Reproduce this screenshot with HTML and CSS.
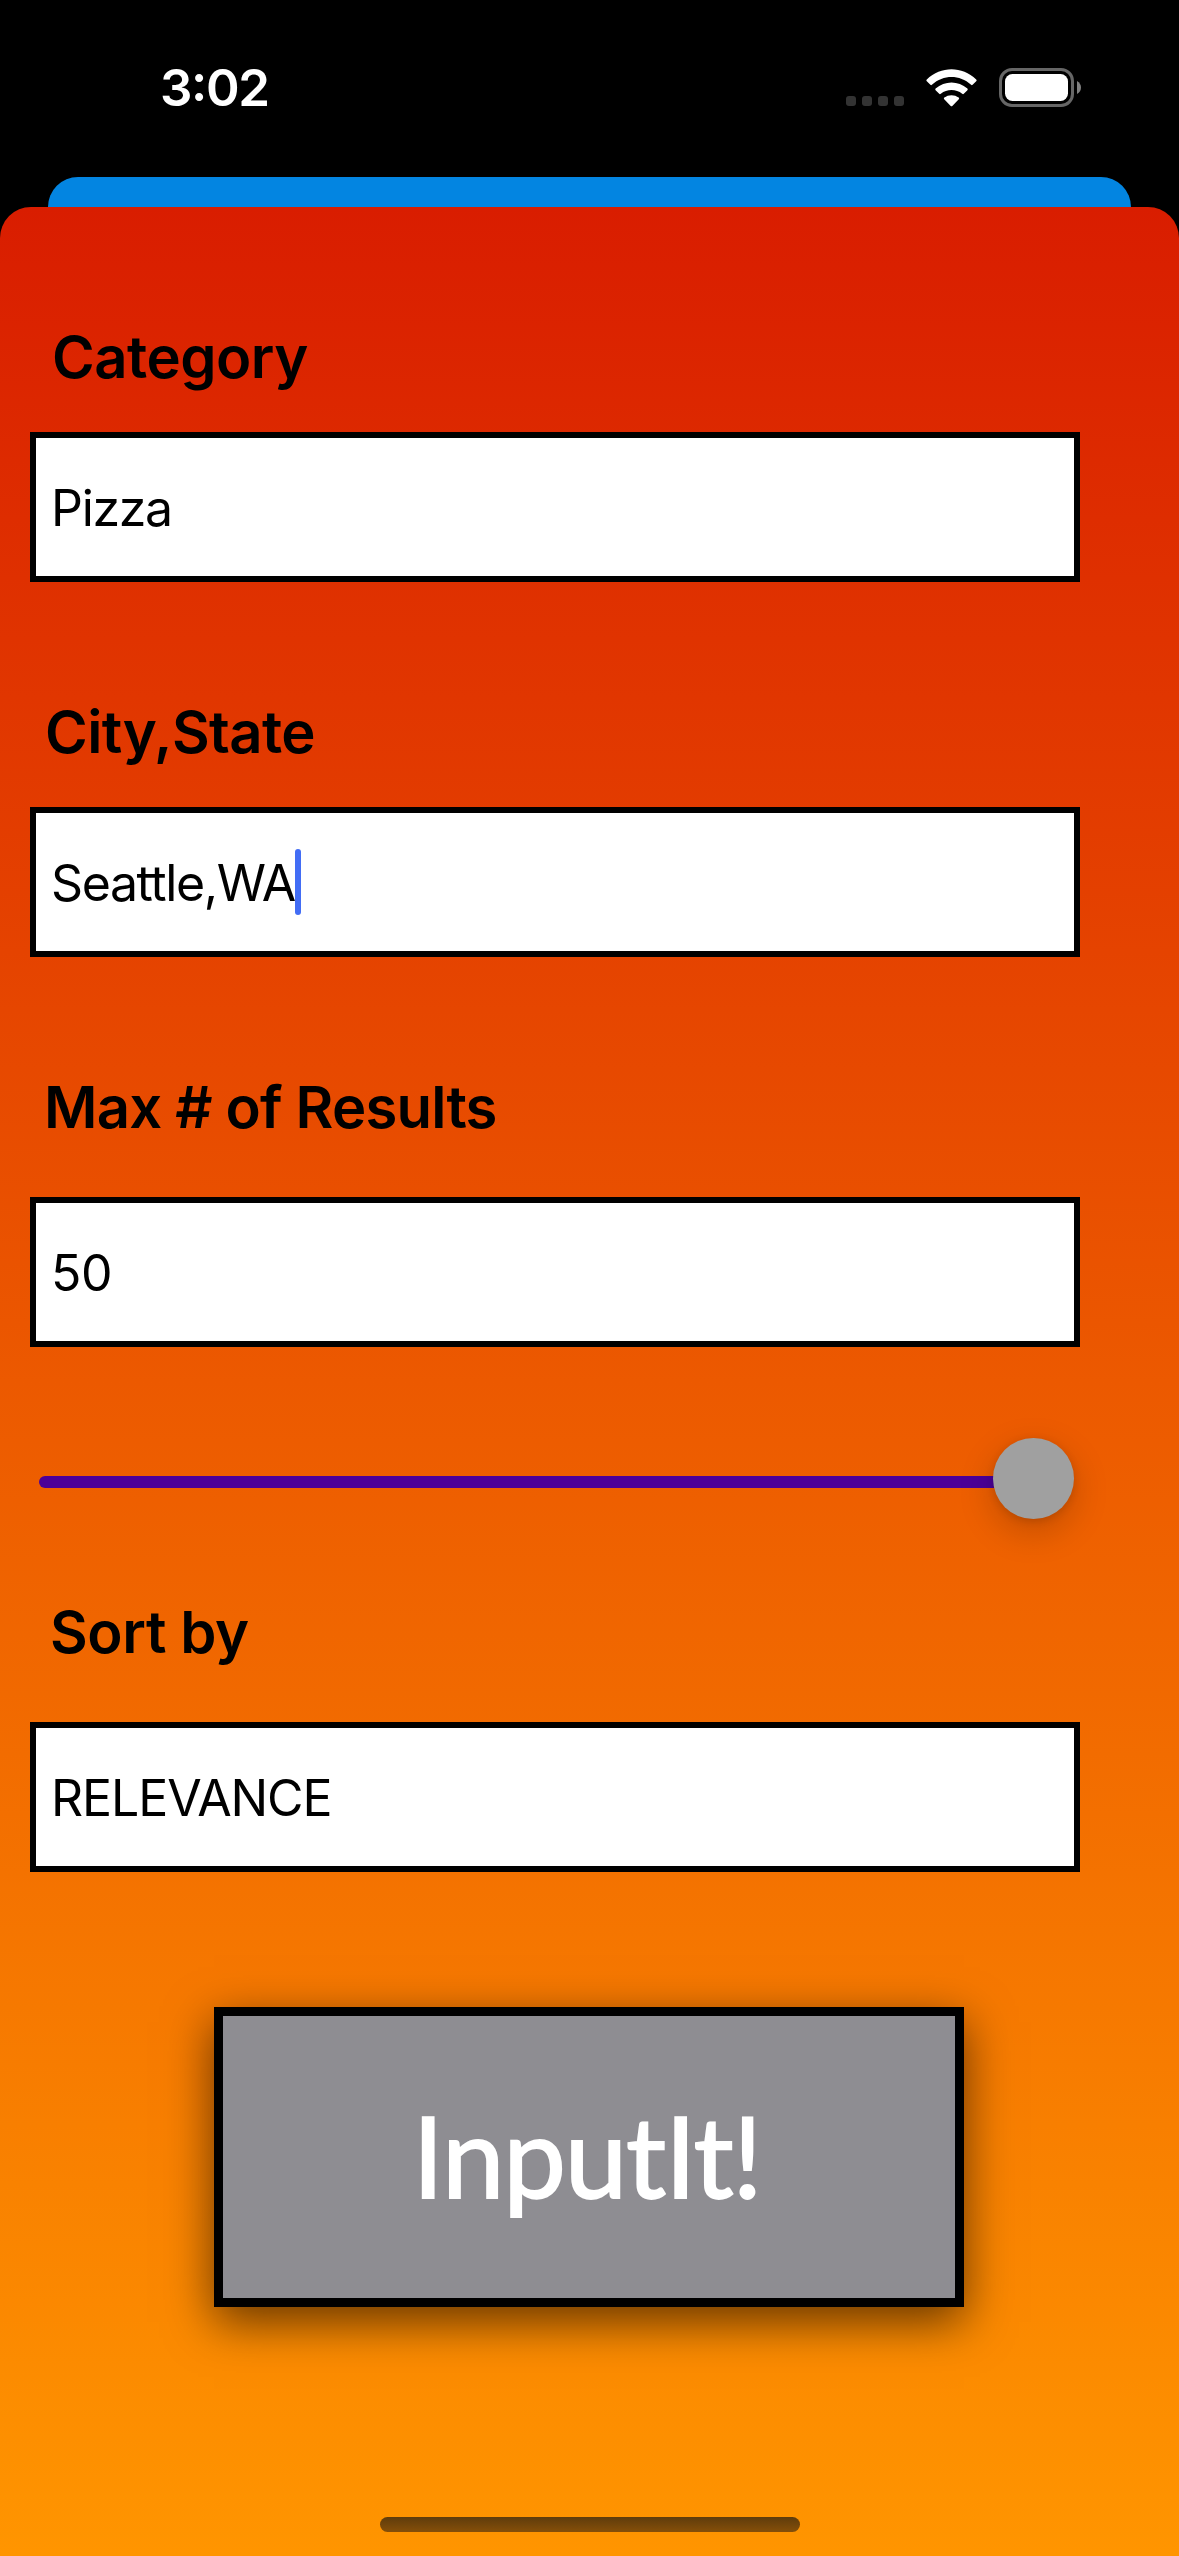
FILE: index.html
```html
<!DOCTYPE html>
<html lang="en">
<head>
<meta charset="utf-8">
<title>InputIt!</title>
<link rel="stylesheet" href="styles.css">
</head>
<body>
<div class="screen">
  <header class="status">
    <time class="clock">3:02</time>
    <div class="signal"><i></i><i></i><i></i><i></i></div>
    <svg class="wifi" width="51" height="38" viewBox="0 0 51 38">
      <path d="M.8 12.2Q-.1 11.3.8 10.4C15-3.2 36-3.2 50.2 10.4Q51.1 11.3 50.2 12.2L46.600 15.8Q45.9 16.5 45.1 15.8C33.5 5.5 17.5 5.5 5.9 15.8Q5.1 16.5 4.4 15.8Z"/>
      <path d="M9.6 21.2Q8.8 20.4 9.6 19.6C18.8 11.3 32.2 11.3 41.4 19.6Q42.2 20.4 41.4 21.2L37.8 24.8Q37.1 25.5 36.2 24.8C30 19.8 21 19.8 14.8 24.8Q13.9 25.5 13.2 24.8Z"/>
      <path d="M18.2 30.2Q17.4 29.3 18.3 28.6C22.4 25.3 28.6 25.3 32.7 28.6Q33.6 29.3 32.8 30.2L26.3 36.9Q25.5 37.6 24.7 36.9Z"/>
    </svg>
    <svg class="battery" width="83" height="39" viewBox="0 0 83 39">
      <rect x="1.5" y="1.5" width="72" height="36" rx="11.5" fill="none" stroke="#666" stroke-width="3"/>
      <rect x="6" y="6" width="63" height="27" rx="7.5" fill="#fff"/>
      <path d="M78 13Q82 15.5 82 19.5T78 26Z" fill="#808080"/>
    </svg>
  </header>
  <div class="back-card"></div>
  <main class="sheet">
    <label class="label category">Category</label>
    <div class="field"><span class="pizza">Pizza</span></div>
    <label class="label city">City,State</label>
    <div class="field"><span class="seattle">Seattle,WA</span><i class="caret"></i></div>
    <label class="label max">Max # of Results</label>
    <div class="field"><span class="count">50</span></div>
    <div class="slider"><div class="track"></div><div class="thumb"></div></div>
    <label class="label sort">Sort by</label>
    <div class="field"><span class="relevance">RELEVANCE</span></div>
    <button class="submit"><span>InputIt!</span></button>
    <div class="home"></div>
  </main>
</div>
</body>
</html>
```
FILE: styles.css
```css
* { box-sizing: border-box; }
body { margin: 0; background: #000; font-family: Inter, "Liberation Sans", sans-serif; }
.screen { width: 1179px; height: 2556px; display: flex; flex-direction: column; overflow: hidden; }
.status { height: 177px; display: flex; align-items: flex-start; color: #fff; padding-left: 160px; }
.clock { width: 686px; margin-top: 57px; font-size: 51px; line-height: 62px; font-weight: 600; letter-spacing: -1.4px; font-feature-settings: "case"; }
.signal { display: flex; gap: 6px; margin-top: 96px; width: 80px; }
.signal i { width: 10px; height: 10px; border-radius: 3px; background: #333; }
.wifi { margin-top: 69px; fill: #fff; }
.battery { margin: 68px 0 0 22px; }
.back-card { height: 30px; margin: 0 48px; background: #0385e1; border-radius: 30px 30px 0 0; }
.sheet { height: 2349px; background: linear-gradient(#d91d00, #ff9500); border-radius: 31px 31px 0 0; display: flex; flex-direction: column; align-items: flex-start; padding-left: 30px; }
.label { height: 72px; line-height: 72px; font-size: 58px; font-weight: 600; white-space: nowrap; }
.category { margin: 114px 0 39px 22px; letter-spacing: -.5px; }
.city { margin: 114px 0 39px 15px; letter-spacing: -.6px; }
.max { margin: 114px 0 54px 14px; letter-spacing: -.8px; }
.sort { margin: 77px 0 54px 20px; letter-spacing: -.4px; }
.field { width: 1050px; height: 150px; flex: none; border: 6px solid #000; background: #fff; display: flex; align-items: center; padding: 2px 0 0 15px; font-size: 50px; line-height: 60px; }
.pizza { letter-spacing: -1.3px; }
.seattle { letter-spacing: -1.4px; }
.count { letter-spacing: -.5px; }
.relevance { letter-spacing: -1.1px; }
.caret { width: 6px; height: 66px; border-radius: 3px; background: #426df5; margin-top: -2px; }
.slider { height: 81px; width: 1035px; margin: 91px 0 0 9px; display: flex; align-items: center; }
.track { width: 955px; height: 12px; margin-top: 7px; border-radius: 6px 0 0 6px; background: #4c0098; }
.thumb { width: 81px; height: 81px; flex: none; margin-left: -1px; border-radius: 50%; background: #a0a0a0; box-shadow: 0 12px 36px rgba(0,0,0,.2), 0 2px 8px rgba(0,0,0,.12); }
.submit { width: 750px; height: 300px; flex: none; margin: 135px 0 0 184px; padding: 0; border: 9px solid #000; border-radius: 0; background: #8e8d92; color: #fff; font-family: Lato, sans-serif; font-size: 112px; line-height: 140px; letter-spacing: -1.2px; -webkit-text-stroke: 1.8px #fff; box-shadow: 0 15px 45px rgba(0,0,0,.6); }
.submit span { display: block; margin: -4px 4px 0 0; }
.home { width: 420px; height: 15px; margin: 210px 0 0 350px; border-radius: 8px; background: linear-gradient(#5f3c0c, #854f09); }
```
